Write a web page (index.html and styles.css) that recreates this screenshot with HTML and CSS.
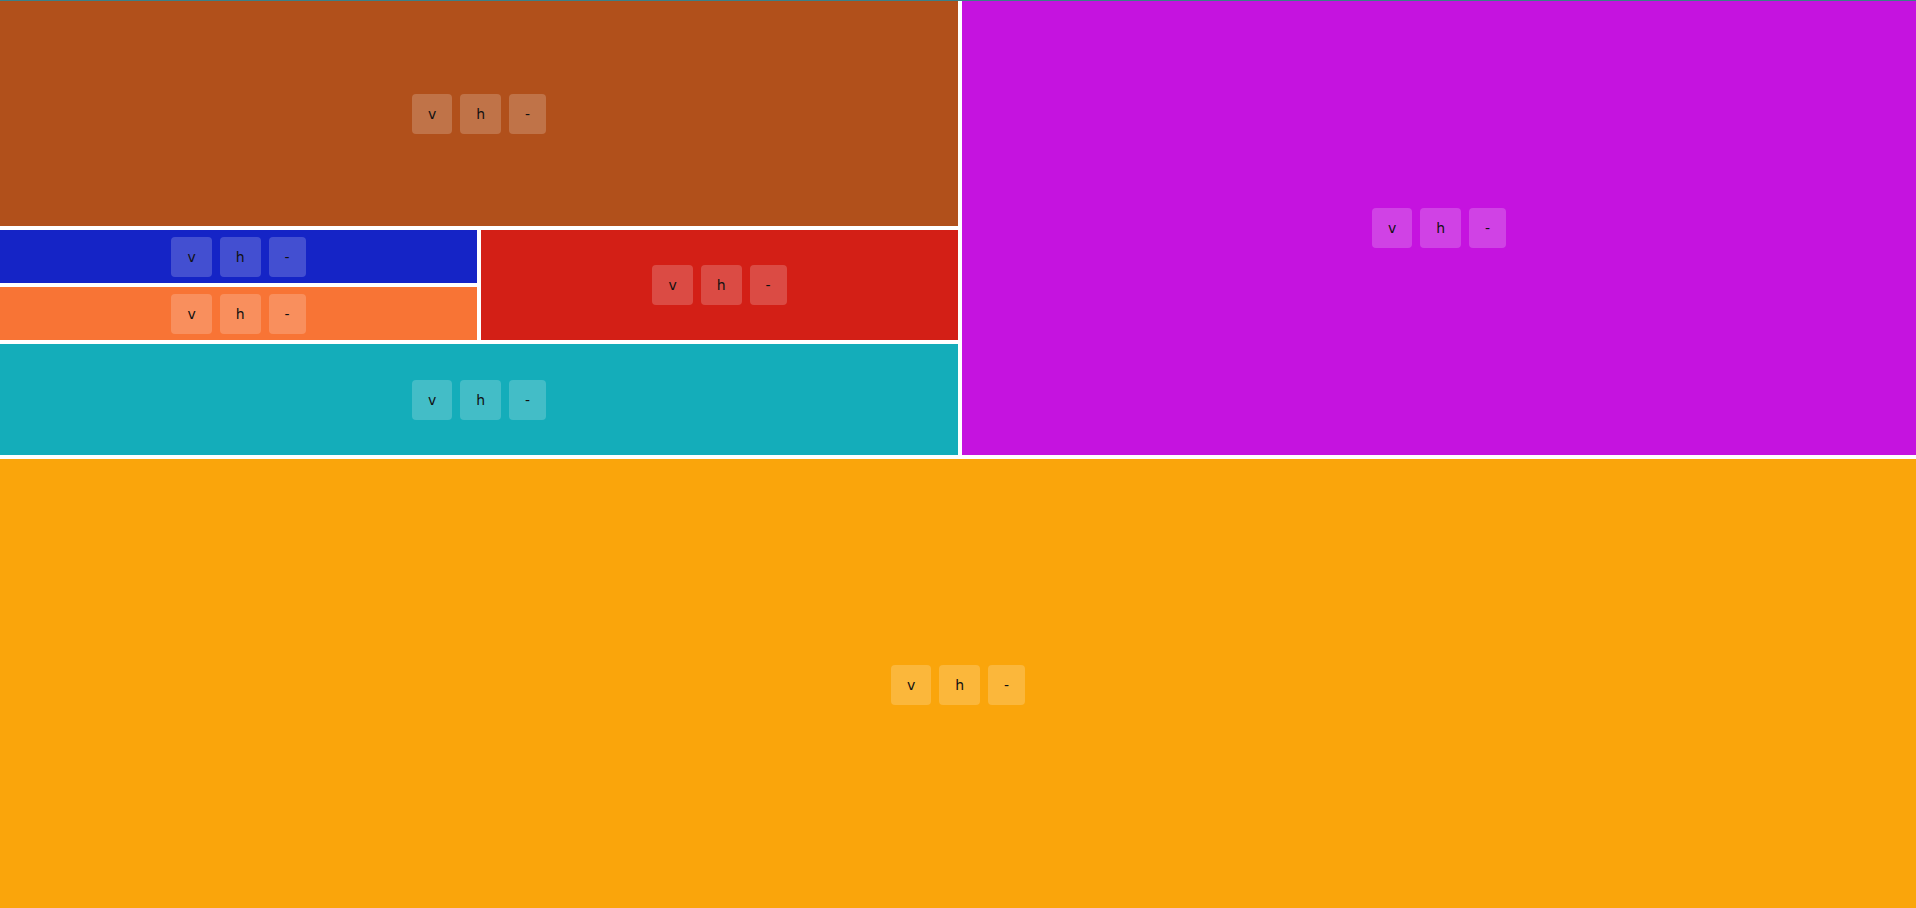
FILE: index.html
```html
<!DOCTYPE html>
<html>
<head>
<meta charset="utf-8">
<link rel="stylesheet" href="styles.css">
</head>
<body>
<div class="topline"></div>
<div class="root">
  <div class="row top">
    <div class="col left">
      <div class="pane brown"><div class="btns"><button>v</button><button>h</button><button>-</button></div></div>
      <div class="row mid">
        <div class="col midleft">
          <div class="pane blue"><div class="btns"><button>v</button><button>h</button><button>-</button></div></div>
          <div class="pane orange"><div class="btns"><button>v</button><button>h</button><button>-</button></div></div>
        </div>
        <div class="pane red"><div class="btns"><button>v</button><button>h</button><button>-</button></div></div>
      </div>
      <div class="pane teal"><div class="btns"><button>v</button><button>h</button><button>-</button></div></div>
    </div>
    <div class="pane magenta"><div class="btns"><button>v</button><button>h</button><button>-</button></div></div>
  </div>
  <div class="pane amber bottom"><div class="btns"><button>v</button><button>h</button><button>-</button></div></div>
</div>
</body>
</html>
```
FILE: styles.css
```css
html, body {
  margin: 0;
  padding: 0;
  background: #ffffff;
  font-family: "DejaVu Sans", sans-serif;
  overflow: hidden;
}
.topline {
  height: 1px;
  background: #3b7f88;
}
.root {
  display: flex;
  flex-direction: column;
  gap: 4px;
}
.row {
  display: flex;
  gap: 4px;
}
.col {
  display: flex;
  flex-direction: column;
  gap: 4px;
}
.top { height: 454px; }
.bottom { height: 452px; }
.left { width: 958px; }
.magenta { flex: 1; }
.brown { height: 225px; }
.mid { height: 110px; }
.midleft { width: 477px; }
.midleft .pane { flex: 1; }
.red { flex: 1; }
.teal { flex: 1; }
.pane {
  display: flex;
  align-items: center;
  justify-content: center;
}
.btns {
  display: flex;
  gap: 8px;
}
.btns button {
  height: 40px;
  padding: 0 16px;
  border: none;
  border-radius: 4px;
  background: rgba(255, 255, 255, 0.2);
  color: #111111;
  font-family: "DejaVu Sans", sans-serif;
  font-size: 14px;
}
.brown { background: #b1501b; }
.blue { background: #1524c6; }
.orange { background: #f87435; }
.red { background: #d31f16; }
.teal { background: #14adba; }
.magenta { background: #c513df; }
.amber { background: #faa50b; }
```
